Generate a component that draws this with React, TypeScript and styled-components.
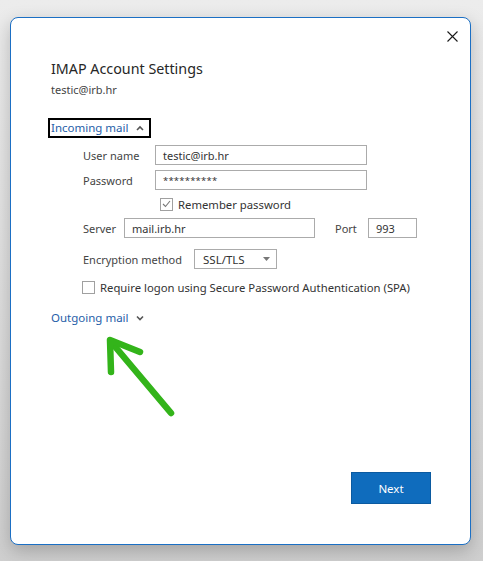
import React from "react";
import styled, { createGlobalStyle } from "styled-components";

const Global = createGlobalStyle`
  html, body { margin: 0; padding: 0; }
  body {
    width: 483px;
    height: 561px;
    overflow: hidden;
    font-family: "Noto Sans", "Open Sans", sans-serif;
    background: linear-gradient(180deg, #ececec 0%, #e2e2e2 40%, #cfcfcf 100%);
  }
`;

const Page = styled.div`
  padding: 17px 12px 0 10px;
  box-sizing: border-box;
  width: 483px;
  height: 561px;
`;

const Dialog = styled.div`
  position: relative;
  box-sizing: border-box;
  width: 461px;
  height: 528px;
  background: #ffffff;
  border: 1px solid #1b6fc4;
  border-radius: 8px;
  box-shadow: 0 6px 18px rgba(0, 0, 0, 0.22);
  padding: 41px 40px 0 40px;
  display: flex;
  flex-direction: column;
`;

const CloseButton = styled.button`
  position: absolute;
  top: 8px;
  right: 8px;
  width: 20px;
  height: 20px;
  padding: 0;
  border: none;
  background: transparent;
  display: flex;
  align-items: center;
  justify-content: center;
`;

const Title = styled.h1`
  margin: 0;
  font-size: 14.3px;
  font-weight: 400;
  color: #262626;
  line-height: 20px;
`;

const Account = styled.div`
  margin-top: 3px;
  font-size: 11px;
  color: #444444;
  line-height: 16px;
`;

const SectionToggle = styled.div<{ $focused?: boolean; $top: number }>`
  display: inline-flex;
  align-items: center;
  gap: 7px;
  align-self: flex-start;
  margin-top: ${(p) => p.$top}px;
  margin-left: ${(p) => (p.$focused ? "-3px" : "0")};
  padding: ${(p) => (p.$focused ? "0 5px 0 1px" : "0")};
  border: ${(p) => (p.$focused ? "2px solid #000" : "none")};
  height: ${(p) => (p.$focused ? "16px" : "20px")};
  font-size: 11.5px;
  color: #1f5ea8;
  line-height: 16px;
`;

const Form = styled.div`
  margin-left: 32px;
  display: flex;
  flex-direction: column;
`;

const Row = styled.div<{ $top: number }>`
  display: flex;
  align-items: center;
  margin-top: ${(p) => p.$top}px;
  height: 20px;
`;

const Label = styled.span<{ $width?: number; $gap?: number }>`
  font-size: 11px;
  color: #444444;
  width: ${(p) => (p.$width ? `${p.$width}px` : "auto")};
  margin-left: ${(p) => p.$gap ?? 0}px;
  flex: none;
  white-space: nowrap;
`;

const Field = styled.div<{ $width: number; $masked?: boolean }>`
  box-sizing: border-box;
  width: ${(p) => p.$width}px;
  height: 20px;
  border: 1px solid #ababab;
  padding: 0 7px;
  display: flex;
  align-items: center;
  font-size: ${(p) => (p.$masked ? "9.5px" : "11px")};
  letter-spacing: ${(p) => (p.$masked ? "0.2px" : "0")};
  color: #333333;
  flex: none;
`;

const Select = styled(Field)`
  justify-content: space-between;
  padding: 0 6px 0 8px;
  font-size: 11.5px;
`;

const Check = styled.span`
  box-sizing: border-box;
  width: 13px;
  height: 13px;
  border: 1px solid #a0a0a0;
  background: #fff;
  display: inline-flex;
  align-items: center;
  justify-content: center;
  flex: none;
`;

const CheckRow = styled.div<{ $top: number; $indent: number }>`
  display: flex;
  align-items: center;
  gap: 5px;
  margin-top: ${(p) => p.$top}px;
  margin-left: ${(p) => p.$indent}px;
  height: 16px;
  font-size: 11.3px;
  color: #333333;
`;

const Footer = styled.div`
  margin-top: auto;
  margin-bottom: 40px;
  display: flex;
  justify-content: flex-end;
`;

const NextButton = styled.button`
  width: 80px;
  height: 32px;
  margin-right: -1px;
  background: #0f6cbd;
  border: 1px solid #0b5aa0;
  color: #ffffff;
  font-family: inherit;
  font-size: 11.5px;
  padding: 0;
`;

const Annotation = styled.svg`
  position: absolute;
  left: 85px;
  top: 300px;
  overflow: visible;
`;

const Caret = ({ up }: { up?: boolean }) => (
  <svg width="8" height="6" viewBox="0 0 8 6">
    <path
      d={up ? "M1 5 L4 2 L7 5" : "M1 1.5 L4 4.5 L7 1.5"}
      fill="none"
      stroke="#555"
      strokeWidth="1.6"
    />
  </svg>
);

export default function App() {
  return (
    <>
      <Global />
      <Page>
        <Dialog>
          <CloseButton aria-label="Close">
            <svg width="11" height="11" viewBox="0 0 11 11">
              <path d="M0.5 0.5 L10.5 10.5 M10.5 0.5 L0.5 10.5" stroke="#1a1a1a" strokeWidth="1.1" />
            </svg>
          </CloseButton>

          <Title>IMAP Account Settings</Title>
          <Account>testic@irb.hr</Account>

          <SectionToggle $focused $top={20}>
            Incoming mail <Caret up />
          </SectionToggle>

          <Form>
            <Row $top={7}>
              <Label $width={72}>User name</Label>
              <Field $width={212}>testic@irb.hr</Field>
            </Row>
            <Row $top={5}>
              <Label $width={72}>Password</Label>
              <Field $width={212} $masked>**********</Field>
            </Row>
            <CheckRow $top={6} $indent={77}>
              <Check>
                <svg width="9" height="8" viewBox="0 0 9 8">
                  <path d="M1 4 L3.5 6.5 L8 1" fill="none" stroke="#777" strokeWidth="1.1" />
                </svg>
              </Check>
              Remember password
            </CheckRow>
            <Row $top={6}>
              <Label $width={41}>Server</Label>
              <Field $width={191}>mail.irb.hr</Field>
              <Label $width={33} $gap={20}>Port</Label>
              <Field $width={49}>993</Field>
            </Row>
            <Row $top={11}>
              <Label $width={111}>Encryption method</Label>
              <Select $width={83}>
                SSL/TLS
                <svg width="7" height="4" viewBox="0 0 7 4">
                  <path d="M0 0 L7 0 L3.5 4 Z" fill="#777" />
                </svg>
              </Select>
            </Row>
            <CheckRow $top={10} $indent={-1}>
              <Check />
              Require logon using Secure Password Authentication (SPA)
            </CheckRow>
          </Form>

          <SectionToggle $top={13}>
            Outgoing mail <Caret />
          </SectionToggle>

          <Footer>
            <NextButton>Next</NextButton>
          </Footer>

          <Annotation width="80" height="100" viewBox="0 0 80 100">
            <g fill="none" stroke="#33b41a" strokeWidth="6.5" strokeLinecap="round" strokeLinejoin="round">
              <path d="M75 95 L16 25" />
              <path d="M15 54 L14 22 L44 34" />
            </g>
          </Annotation>
        </Dialog>
      </Page>
    </>
  );
}
